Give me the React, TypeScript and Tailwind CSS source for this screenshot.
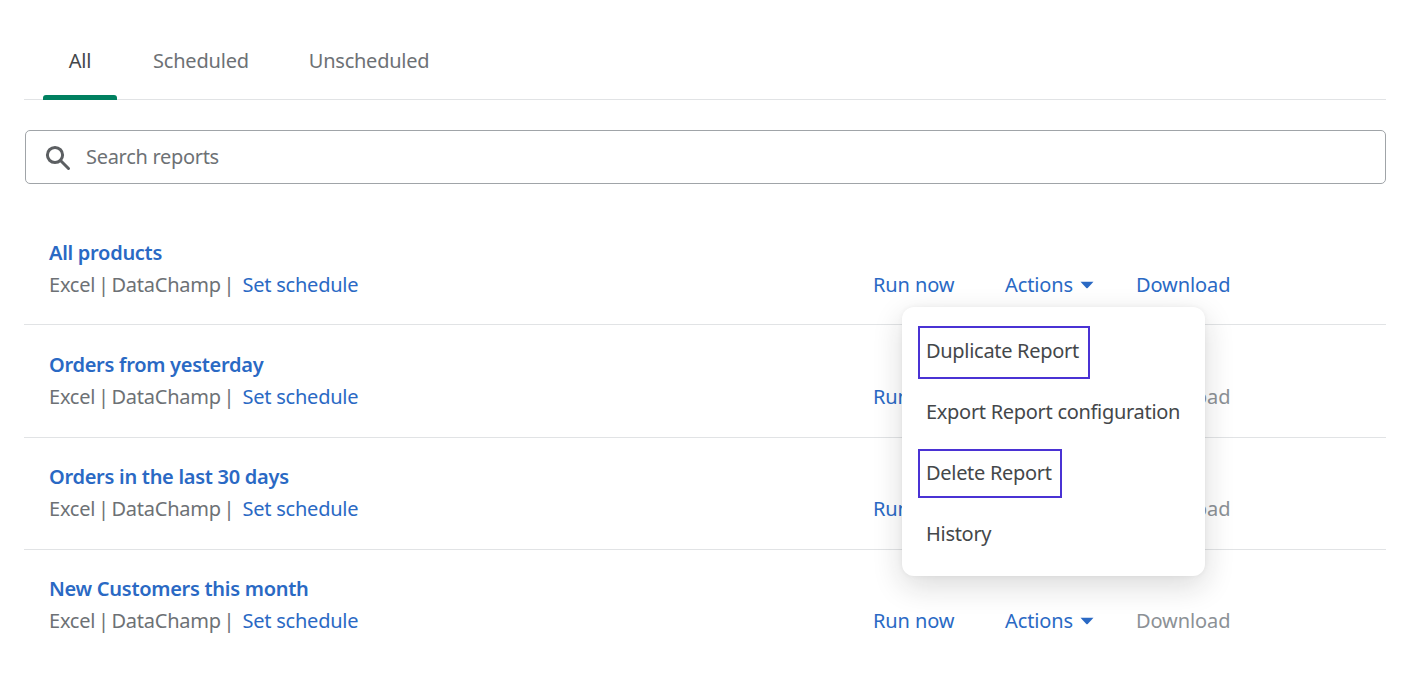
import React from "react";

const rows = [
  { title: "All products", dl: true, y: "h-[112px] pb-[23px]" },
  { title: "Orders from yesterday", dl: false, y: "h-[113px] pb-[24px]" },
  { title: "Orders in the last 30 days", dl: false, y: "h-[112px] pb-[24px]" },
  { title: "New Customers this month", dl: false, y: "h-[110px] pb-[23px]" },
];

function Row({ title, dl, h, last }: { title: string; dl: boolean; h: string; last: boolean }) {
  return (
    <div className={`flex items-end pl-[25px] ${h} ${last ? "" : "border-b border-[#e1e3e5]"}`}>
      <div className="flex flex-col w-[824px]">
        <a className="text-[20px] leading-[32px] font-semibold text-[#2a69c4] tracking-[-0.28px]">{title}</a>
        <div className="flex text-[20px] leading-[32px] tracking-[-0.22px]">
          <span className="text-[#6d7175] [word-spacing:-2.3px]">Excel | DataChamp |</span>
          <a className="ml-[8px] text-[#2a69c4]">Set schedule</a>
        </div>
      </div>
      <div className="flex items-center text-[20px] leading-[32px] tracking-[-0.1px] text-[#2a69c4]">
        <a className="w-[132px]">Run now</a>
        <a className="w-[131px] flex items-center">
          Actions
          <svg width="14" height="8" viewBox="0 0 14 8" className="ml-[7px]"><path d="M0.5 0.8h13L7.7 6.9a1 1 0 0 1-1.4 0z" fill="#2a69c4" /></svg>
        </a>
        <a className={dl ? "text-[#2a69c4]" : "text-[#8c9196]"}>Download</a>
      </div>
    </div>
  );
}

export default function App() {
  return (
    <div className="relative h-[683px] w-[1405px] bg-white pl-6 pr-[19px] overflow-hidden font-['Noto_Sans','Open_Sans',sans-serif]">
      <div className="flex h-[100px] items-start pt-[22px] pl-[19px] border-b border-[#e1e3e5] text-[20px] tracking-[-0.2px]">
        <div className="relative w-[74px] h-[78px] text-center pt-[20px] leading-[38px] text-[#44474a]">
          All
          <div className="absolute bottom-0 left-0 right-0 h-[5px] rounded-t-[3px] bg-[#008060]" />
        </div>
        <div className="ml-[36px] pt-[20px] leading-[38px] text-[#6d7175]">Scheduled</div>
        <div className="ml-[60px] pt-[20px] leading-[38px] text-[#6d7175] tracking-[-0.25px]">Unscheduled</div>
      </div>
      <div className="mt-[30px] ml-px flex h-[54px] items-center rounded-[5px] border border-[#a0a4a8] pl-[18px]">
        <svg width="27" height="27" viewBox="0 0 27 27" fill="none" className="shrink-0">
          <circle cx="11" cy="11" r="7.6" stroke="#5c5f62" strokeWidth="3" />
          <path d="M16.5 16.5L24.5 24.5" stroke="#5c5f62" strokeWidth="3" strokeLinecap="round" />
        </svg>
        <span className="ml-[15px] text-[20px] tracking-[-0.3px] text-[#6d7175]">Search reports</span>
      </div>
      <div className="mt-[29px]">
        {rows.map((r, i) => (
          <Row key={r.title} title={r.title} dl={r.dl} h={r.y} last={i === 3} />
        ))}
      </div>
      <div className="absolute left-[902px] top-[307px] flex h-[269px] w-[303px] flex-col items-start rounded-[12px] bg-white pl-4 pt-[19px] text-[20px] tracking-[-0.3px] text-[#44474a] shadow-[0_10px_30px_rgba(23,24,24,0.16),0_0_5px_rgba(0,0,0,0.05)]">
        <div className="flex h-[53px] items-center border-2 border-[#4a32d4] pl-[6px] pr-[9px] pb-[4px]">Duplicate Report</div>
        <div className="flex h-[70px] items-center pl-2 pb-[4px]">Export Report configuration</div>
        <div className="flex h-[49px] items-center border-2 border-[#4a32d4] pl-[6px] pr-[8px] pb-[2px]">Delete Report</div>
        <div className="flex h-[73px] items-center pl-2 pb-[2px]">History</div>
      </div>
    </div>
  );
}
